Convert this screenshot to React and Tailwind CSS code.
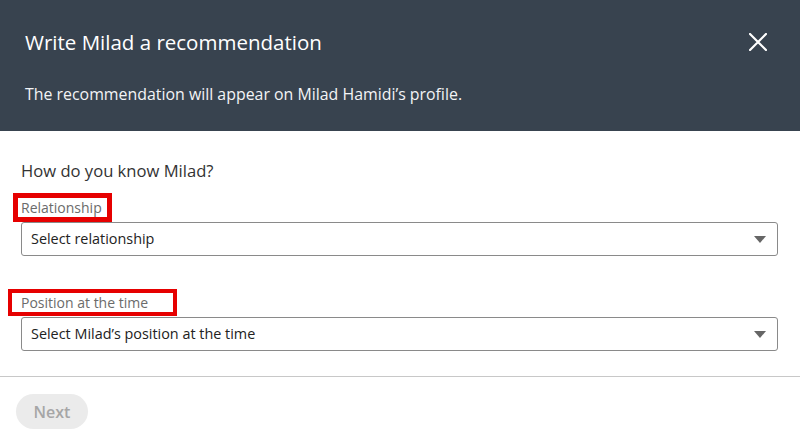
const font = { fontFamily: '"Open Sans", "Noto Sans", sans-serif' };

function Caret() {
  return (
    <svg width="12" height="7" viewBox="0 0 12 7" className="shrink-0">
      <path d="M0 0h12L6 7z" fill="#666" />
    </svg>
  );
}

function SelectField({ label, placeholder, boxClass }) {
  return (
    <div className="relative">
      <div className="h-[28px] pt-[5px] pl-[21px] text-[14px] leading-[18px] text-[#6b6b6b]">{label}</div>
      <div className={`pointer-events-none absolute border-[4px] border-[#e60000] ${boxClass}`} />
      <div className="ml-[21px] mr-[22px] flex h-[34px] items-center justify-between rounded-[3px] border border-[#8a8a8a] pl-[9px] pr-[11px]">
        <span className="text-[14.4px] text-[#222]">{placeholder}</span>
        <Caret />
      </div>
    </div>
  );
}

export default function App() {
  return (
    <div className="h-[444px] w-[800px] overflow-hidden bg-white" style={font}>
      <header className="flex h-[131px] flex-col bg-[#38434f] pl-[25px] pr-[33px] text-white">
        <div className="flex items-center justify-between pt-[28px]">
          <h1 className="text-[20.5px] leading-[28px] font-normal">Write Milad a recommendation</h1>
          <svg width="18" height="18" viewBox="0 0 18 18">
            <path d="M1 1L17 17M17 1L1 17" stroke="#fff" strokeWidth="2.2" strokeLinecap="square" />
          </svg>
        </div>
        <p className="mt-[28px] text-[15.9px] leading-[20px] text-[#f3f4f6]">
          The recommendation will appear on Milad Hamidi’s profile.
        </p>
      </header>

      <div className="pt-[29px]">
        <p className="pl-[21px] text-[16.6px] leading-[22px] text-[#333]">How do you know Milad?</p>
        <div className="mt-[12px]">
          <SelectField
            label="Relationship"
            placeholder="Select relationship"
            boxClass="left-[13px] top-[-1px] h-[29px] w-[99px] border-[5px]"
          />
        </div>
        <div className="mt-[33px]">
          <SelectField
            label="Position at the time"
            placeholder="Select Milad’s position at the time"
            boxClass="left-[8px] top-[0px] h-[27px] w-[169px]"
          />
        </div>
      </div>

      <div className="mt-[25px] border-t border-[#c8c8c8] px-[16px] pt-[17px]">
        <button className="h-[35px] w-[72px] rounded-full bg-[#ebebeb] text-[16px] font-semibold text-[#a6a6a6]">
          Next
        </button>
      </div>
    </div>
  );
}
